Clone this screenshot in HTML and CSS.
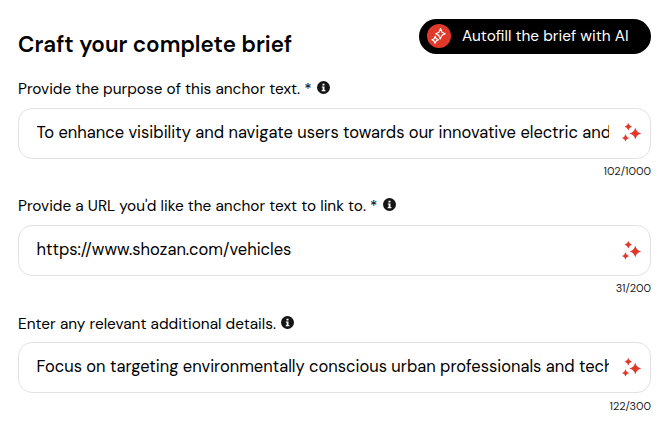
FILE: index.html
```html
<!DOCTYPE html>
<html lang="en">
	<head>
		<meta charset="utf-8"/>
		<title>Craft your complete brief</title>
		<link rel="stylesheet" href="styles.css">
	</head>
	<body>
		<!--shared icons-->
		<svg class="iconDefs" width="0" height="0">
			<symbol id="iconInfo" viewBox="0 0 13 13">
				<circle cx="6.5" cy="6.5" r="6.5" fill="#151515"/>
				<path d="M5.5 2.7h2v1.8h-2zM4.8 5.4h2.7v3.7h.9v1.1H4.7V9.1h.9V6.5h-.8z" fill="#fff"/>
			</symbol>
			<symbol id="iconSparkles" viewBox="0 0 20 20">
				<path d="M13.3 4.4Q14.4 9.4 19.4 10.5Q14.4 11.6 13.3 16.6Q12.2 11.6 7.2 10.5Q12.2 9.4 13.3 4.4z"/>
				<path d="M6.3 0Q7 3 10 3.7Q7 4.4 6.3 7.4Q5.6 4.4 2.6 3.7Q5.6 3 6.3 0z"/>
				<path d="M3.5 11.2Q4.2 14.2 7.2 14.9Q4.2 15.6 3.5 18.6Q2.8 15.6 0 14.9Q2.8 14.2 3.5 11.2z"/>
			</symbol>
		</svg>

		<div id="mainContent">
			<header>
				<h1>Craft your complete brief</h1>
				<button class="autofill" type="button">
					<svg class="autofillIcon" viewBox="0 0 24 24">
						<circle cx="12" cy="12" r="12" fill="#e0392b"/>
						<g fill="none" stroke="#fff" stroke-width="1.2" stroke-linejoin="round">
							<path d="M13.6 4.6L15 8.2L18.2 9.8L14.8 11.4L13.2 15L11.8 11.4L8.8 9.8L12 8.2z"/>
							<path d="M8.2 12.3L9.2 14.7L11.4 15.8L9.2 16.9L8 19.3L7 16.9L5 15.8L7.2 14.7z"/>
						</g>
					</svg>
					<span>Autofill the brief with AI</span>
				</button>
			</header>

			<div class="field">
				<div class="fieldLabel">
					<label for="purpose">Provide the purpose of this anchor text. *</label>
					<svg class="info"><use href="#iconInfo"/></svg>
				</div>
				<div class="inputBox">
					<input id="purpose" type="text" value="To enhance visibility and navigate users towards our innovative electric and">
					<svg class="sparkles"><use href="#iconSparkles"/></svg>
				</div>
				<div class="counter">102/1000</div>
			</div>

			<div class="field">
				<div class="fieldLabel">
					<label for="url">Provide a URL you'd like the anchor text to link to. *</label>
					<svg class="info"><use href="#iconInfo"/></svg>
				</div>
				<div class="inputBox">
					<input id="url" type="text" value="https://www.shozan.com/vehicles">
					<svg class="sparkles"><use href="#iconSparkles"/></svg>
				</div>
				<div class="counter">31/200</div>
			</div>

			<div class="field">
				<div class="fieldLabel">
					<label for="details">Enter any relevant additional details.</label>
					<svg class="info"><use href="#iconInfo"/></svg>
				</div>
				<div class="inputBox">
					<input id="details" type="text" value="Focus on targeting environmentally conscious urban professionals and tech">
					<svg class="sparkles"><use href="#iconSparkles"/></svg>
				</div>
				<div class="counter">122/300</div>
			</div>
		</div>
	</body>
</html>
```
FILE: styles.css
```css
/*main layout*/
*{
	box-sizing: border-box;
}
body{
	margin: 0;
	background-color: #fff;
	color: #000;
	font-family: "DM Sans", Lato, sans-serif;
	overflow: hidden;
}
.iconDefs{
	position: absolute;
}
#mainContent{
	width: 633px;
	margin: 19px 0 0 18px;
}

/*title and autofill button*/
header{
	display: flex;
	justify-content: space-between;
	height: 58px;
}
header h1{
	margin: 11px 0 0 0;
	font-size: 22.4px;
	line-height: 30px;
	font-weight: 600;
}
.autofill{
	display: flex;
	align-items: center;
	gap: 11px;
	width: 232px;
	height: 35px;
	padding: 0 0 1px 8px;
	border: 0;
	border-radius: 18px;
	background-color: #000;
	color: #fff;
	font-family: inherit;
	font-size: 15.4px;
	white-space: nowrap;
	cursor: pointer;
}
.autofillIcon{
	width: 24px;
	height: 24px;
}

/*label, input and counter*/
.field{
	height: 117.3px;
}
.fieldLabel{
	display: flex;
	align-items: center;
	gap: 5px;
	height: 24px;
	font-size: 15.4px;
	white-space: nowrap;
}
.info{
	width: 13px;
	height: 13px;
	margin-top: -3px;
}
.inputBox{
	display: flex;
	align-items: center;
	width: 633px;
	height: 51px;
	margin-top: 6.8px;
	padding-left: 17.5px;
	border: solid 1px #e2e2e2;
	border-radius: 14px;
}
.inputBox input{
	width: 572.5px;
	height: 30px;
	margin-top: -2px;
	padding: 0;
	border: 0;
	outline: 0;
	background: none;
	color: #000;
	font-family: inherit;
	font-size: 16.5px;
}
.sparkles{
	width: 20px;
	height: 20px;
	margin-left: 13px;
	fill: #e0392b;
}
.counter{
	margin-top: 4.2px;
	font-size: 11px;
	line-height: 16px;
	text-align: right;
	color: #222;
}
```
